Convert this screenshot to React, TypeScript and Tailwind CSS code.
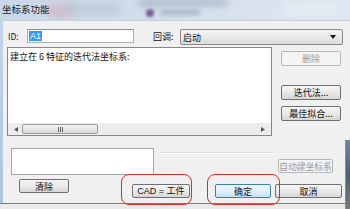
import React from "react";

const btn =
  "flex items-center justify-center whitespace-nowrap rounded-[2px] border border-[#707070] bg-gradient-to-b from-[#f6f6f6] via-[#e9e9e9] to-[#d6d6d6] text-[9px] leading-none text-[#111]";
const btnDisabled =
  "flex items-center justify-center whitespace-nowrap rounded-[2px] border border-[#b5b8bb] bg-[#f4f4f4] text-[9px] leading-none text-[#9a9a9a]";

export default function App() {
  return (
    <div
      className="relative flex h-[209px] w-[350px] flex-col overflow-hidden bg-[#e6e6e6]"
      style={{ fontFamily: '"Noto Sans CJK SC", "Liberation Sans", sans-serif' }}
    >
      {/* title bar */}
      <div className="relative flex h-[20px] items-center overflow-hidden bg-gradient-to-r from-[#c9d8e9] via-[#d3dfec] to-[#dde7f1] pl-[2px]">
        <div className="absolute left-[45px] top-[4px] h-[14px] w-[30px] rounded-full bg-[#d9a9b0] opacity-60 blur-[4px]" />
        <div className="absolute left-[62px] top-[3px] h-[12px] w-[60px] rounded-full bg-[#b9c6d4] opacity-70 blur-[4px]" />
        <div className="absolute left-[146px] top-[9px] h-[8px] w-[8px] rounded-full bg-[#5a3a78] opacity-80 blur-[1.5px]" />
        <div className="absolute left-[138px] top-[0px] h-[6px] w-[90px] rounded-full bg-[#7f8ea3] opacity-50 blur-[3px]" />
        <div className="absolute left-[160px] top-[10px] h-[5px] w-[40px] rounded-full bg-[#8d9aac] opacity-60 blur-[2px]" />
        <div className="absolute left-[280px] top-[2px] h-[14px] w-[60px] rounded-full bg-[#e6edf5] opacity-70 blur-[4px]" />
        <span className="relative text-[9.5px] leading-none text-[#1a1a1a]">坐标系功能</span>
      </div>

      {/* body */}
      <div className="flex h-[183px]">
        <div className="w-[3px] bg-gradient-to-b from-[#c4d6ea] to-[#a9c4e2]" />
        <div className="flex flex-1 flex-col border-t border-[#c9d1da] bg-[#f0f0f0]">
          {/* row 1 */}
          <div className="mt-[8px] flex h-[16px] items-start">
            <span className="ml-[5px] mt-[3px] w-[19px] text-[8.5px] leading-none text-[#111]">ID:</span>
            <div className="flex h-[14px] w-[107px] items-center border border-[#abadb3] border-t-[#8e9199] bg-white px-[1px]">
              <span className="bg-[#3399ff] px-[1px] text-[9px] leading-[10px] text-white" style={{ fontFamily: '"Liberation Sans", sans-serif' }}>A1</span>
            </div>
            <span className="ml-[19px] mt-[3px] w-[27px] text-[9px] leading-none text-[#111]">回调:</span>
            <div className="flex h-[16px] w-[163px] items-center justify-between rounded-[2px] border border-[#8a8a8a] bg-gradient-to-b from-[#f4f4f4] to-[#dcdcdc] pl-[2px] pr-[6px]">
              <span className="text-[9px] leading-none text-[#111]">启动</span>
              <svg width="6" height="4" viewBox="0 0 6 4">
                <path d="M0 0 L6 0 L3 4 Z" fill="#111" />
              </svg>
            </div>
          </div>

          {/* row 2 */}
          <div className="mt-[2px] flex">
            <div className="ml-[4px] flex h-[89px] w-[265px] flex-col border border-[#828790] bg-white">
              <div className="flex-1 pl-[2px] pt-[4px] text-[9px] leading-none text-[#111]">建立在 6 特征的迭代法坐标系:</div>
              <div className="flex h-[12px] items-center bg-[#ececec]">
                <svg className="ml-[6px]" width="4" height="5" viewBox="0 0 4 5">
                  <path d="M4 0 L4 5 L0 2.5 Z" fill="#555" />
                </svg>
                <div className="ml-[4px] flex h-[10px] w-[76px] items-center justify-center rounded-[2px] border border-[#9a9a9a] bg-gradient-to-b from-[#f4f4f4] to-[#d8d8d8]">
                  <div className="flex gap-[1px]">
                    <div className="h-[5px] w-[1px] bg-[#666]" />
                    <div className="h-[5px] w-[1px] bg-[#666]" />
                    <div className="h-[5px] w-[1px] bg-[#666]" />
                  </div>
                </div>
                <div className="flex-1" />
                <svg className="mr-[6px]" width="4" height="5" viewBox="0 0 4 5">
                  <path d="M0 0 L0 5 L4 2.5 Z" fill="#555" />
                </svg>
              </div>
            </div>
            <div className="ml-[9px] flex w-[60px] flex-col">
              <div className={`${btnDisabled} mt-[4px] h-[15px]`}>删除</div>
              <div className={`${btn} mt-[19px] h-[15px]`}>迭代法...</div>
              <div className={`${btn} mt-[6px] h-[15px]`}>最佳拟合...</div>
            </div>
          </div>

          {/* row 3 */}
          <div className="mt-[12px] flex items-start">
            <div className="ml-[8px] h-[27px] w-[143px] border border-[#a0a4aa] bg-white" />
            <div className="ml-[6px] mt-[4px] w-[113px] border-b border-t border-b-white border-t-[#dcdcdc]" />
            <div className={`${btnDisabled} ml-[5px] mt-[11px] h-[14px] w-[55px] text-[8.5px] tracking-[-0.2px]`}>自动建坐标系</div>
          </div>

          {/* row 4 */}
          <div className="mt-[4px] flex items-start">
            <div className={`${btn} ml-[16px] h-[14px] w-[50px]`}>清除</div>
            <div className={`${btn} ml-[63px] mt-[5px] h-[14px] w-[58px]`}>
              <span style={{ fontFamily: '"Liberation Sans", "Noto Sans CJK SC", sans-serif' }}>CAD = 工件</span>
            </div>
            <div className="ml-[25px] mt-[5px] flex h-[14px] w-[56px] items-center justify-center rounded-[2px] border border-[#3c7fb1] bg-gradient-to-b from-[#eef7fd] via-[#dff0fb] to-[#c4e3f7] text-[9px] leading-none text-[#111]">
              确定
            </div>
            <div className={`${btn} ml-[4px] mt-[5px] h-[14px] w-[67px]`}>取消</div>
          </div>
        </div>
      </div>

      {/* bottom edge */}
      <div className="h-[1px] bg-[#7d7d7d]" />
      <div className="flex-1 bg-[#eaeaea]" />

      {/* window behind on right */}
      <div className="absolute bottom-0 right-0 top-[140px] w-[5px] border-l border-[#8c8c8c] bg-gradient-to-b from-[#6f86a3] via-[#4b5f78] to-[#7a7a7a]" />

      {/* red annotation outlines */}
      <div className="absolute left-[121px] top-[174px] h-[31px] w-[71px] rounded-[8px] border border-[#d0302e]" />
      <div className="absolute left-[207px] top-[174px] h-[31px] w-[73px] rounded-[8px] border border-[#d0302e]" />
    </div>
  );
}
